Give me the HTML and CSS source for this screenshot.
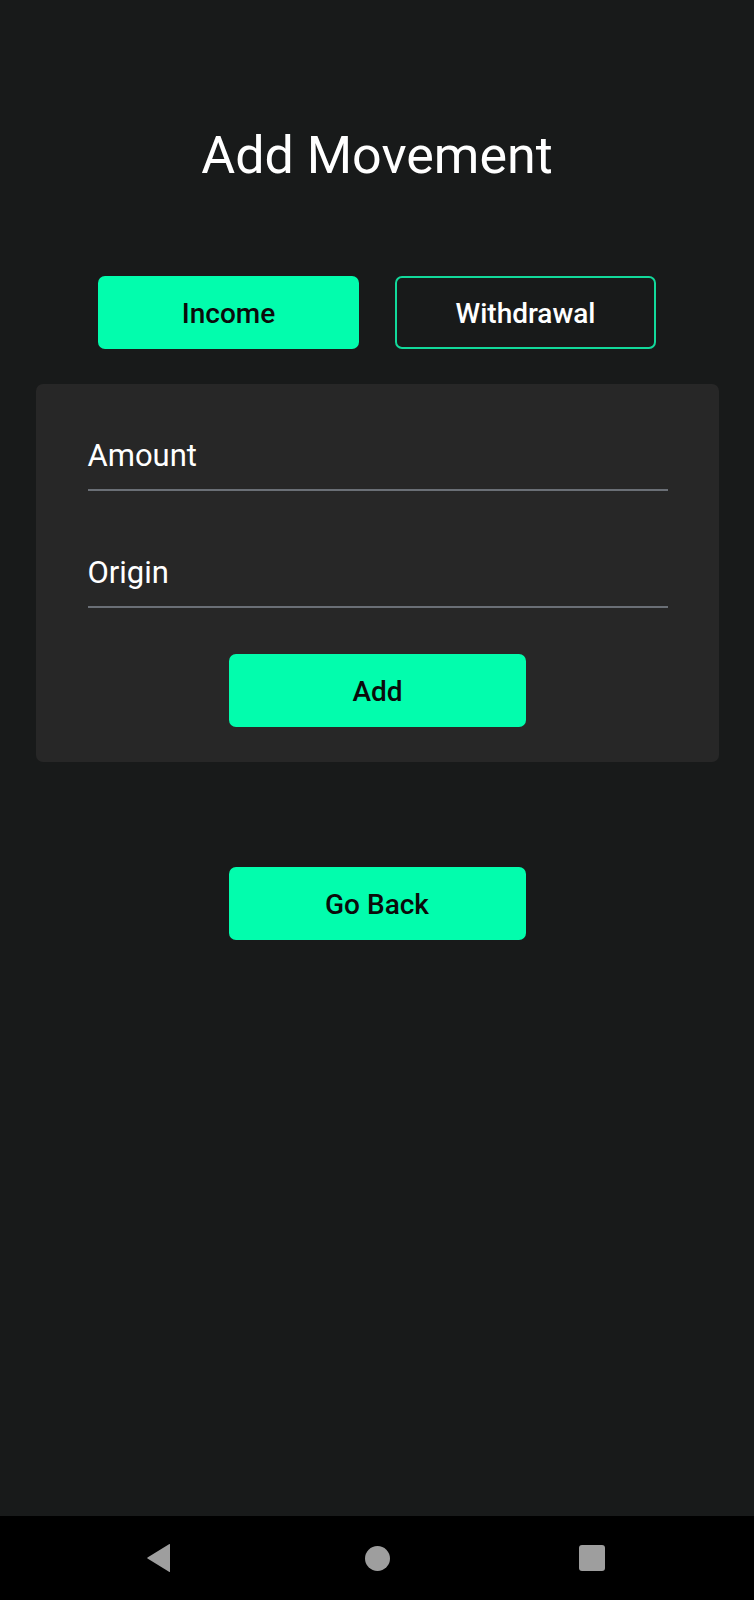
FILE: index.html
```html
<!DOCTYPE html>
<html lang="en">
<head>
<meta charset="utf-8">
<title>Add Movement</title>
<link rel="stylesheet" href="styles.css">
</head>
<body>
<div class="screen">
  <main class="content">
    <h1 class="title">Add Movement</h1>
    <div class="toggle-row">
      <button class="btn btn-solid toggle">Income</button>
      <button class="btn btn-outline toggle">Withdrawal</button>
    </div>
    <section class="card">
      <div class="field"><span class="field-label">Amount</span></div>
      <div class="field"><span class="field-label">Origin</span></div>
      <button class="btn btn-solid action">Add</button>
    </section>
    <button class="btn btn-solid action back">Go Back</button>
  </main>
  <nav class="navbar">
    <svg class="nav-icon" width="26" height="30" viewBox="0 0 26 30"><path d="M24 1.5 L24 28.5 Q24 29.5 23 28.7 L1.5 15.6 Q0.8 15 1.5 14.4 L23 1.3 Q24 0.6 24 1.5 Z" fill="#9e9e9e"/></svg>
    <span class="nav-circle"></span>
    <span class="nav-square"></span>
  </nav>
</div>
</body>
</html>
```

FILE: styles.css
```css
* { box-sizing: border-box; }
html, body { margin: 0; padding: 0; }
body {
  background: #181a1a;
  font-family: Roboto, "Liberation Sans", sans-serif;
  color: #ffffff;
}
.screen {
  width: 754px;
  height: 1600px;
  display: flex;
  flex-direction: column;
}
.content {
  flex: 1;
  display: flex;
  flex-direction: column;
  align-items: center;
  padding-top: 125px;
}
.title {
  margin: 0;
  font-size: 52px;
  line-height: 62px;
  font-weight: 400;
  color: #ffffff;
}
.toggle-row {
  margin-top: 89px;
  display: flex;
  gap: 36px;
}
.btn {
  font-family: Roboto, "Liberation Sans", sans-serif;
  font-weight: 500;
  font-size: 28px;
  height: 73px;
  border-radius: 7px;
  border: none;
  display: flex;
  align-items: center;
  justify-content: center;
  padding: 2px 0 0;
  cursor: pointer;
}
.btn-solid {
  background: #02fdad;
  color: #0b0b0b;
}
.btn-outline {
  background: transparent;
  color: #ffffff;
  border: 2px solid #12d99b;
}
.toggle { width: 261px; }
.card {
  margin-top: 35px;
  width: 683px;
  background: #272727;
  border-radius: 7px;
  padding: 52px 51px 35px 52px;
  display: flex;
  flex-direction: column;
  align-items: center;
}
.field {
  width: 100%;
  padding-bottom: 13px;
  border-bottom: 2px solid #6a6f76;
}
.field + .field { margin-top: 62px; }
.field-label {
  display: block;
  font-size: 31px;
  line-height: 40px;
  color: #ffffff;
}
.action {
  width: 297px;
  margin-top: 46px;
}
.back { margin-top: 105px; }
.navbar {
  height: 84px;
  background: #000000;
  position: relative;
}
.nav-icon {
  position: absolute;
  left: 146px;
  top: 27px;
}
.nav-circle {
  position: absolute;
  left: 365px;
  top: 30px;
  width: 25px;
  height: 25px;
  border-radius: 50%;
  background: #9e9e9e;
}
.nav-square {
  position: absolute;
  left: 579px;
  top: 29px;
  width: 26px;
  height: 26px;
  border-radius: 3px;
  background: #9e9e9e;
}
```
